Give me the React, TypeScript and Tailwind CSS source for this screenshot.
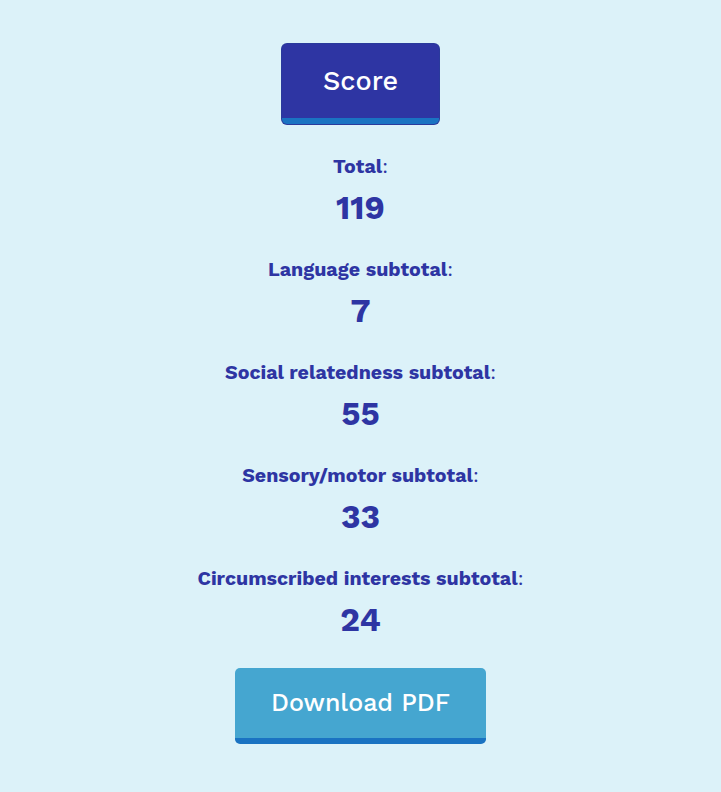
import React from "react";

const rows: [string, string][] = [
  ["Total", "119"],
  ["Language subtotal", "7"],
  ["Social relatedness subtotal", "55"],
  ["Sensory/motor subtotal", "33"],
  ["Circumscribed interests subtotal", "24"],
];

export default function App() {
  return (
    <div
      className="min-h-[792px] w-full bg-[#dcf2f9] flex flex-col items-center pt-[44px]"
      style={{ fontFamily: '"Work Sans", Inter, "Open Sans", sans-serif' }}
    >
      <button className="w-[157px] h-[80px] rounded-[5px] bg-[#2e35a3] border-b-[6px] border-[#1a73c2] text-white text-[27px] font-medium shadow-[0_0_0_1px_#2a3a9c]">
        Score
      </button>
      <div className="flex flex-col items-center gap-[30px] mt-[31px]">
        {rows.map(([label, value]) => (
          <div key={label} className="flex flex-col items-center text-[#2e35a3]">
            <div className="text-[19.6px] leading-[24px] font-bold">
              {label}
              <span className="font-normal">:</span>
            </div>
            <div className="mt-[9px] text-[33px] leading-[40px] font-bold">{value}</div>
          </div>
        ))}
      </div>
      <button className="mt-[28px] w-[251px] h-[76px] rounded-[5px] bg-[#45a6d0] border-b-[6px] border-[#1a73c2] text-white text-[25px] font-medium">
        Download PDF
      </button>
    </div>
  );
}
